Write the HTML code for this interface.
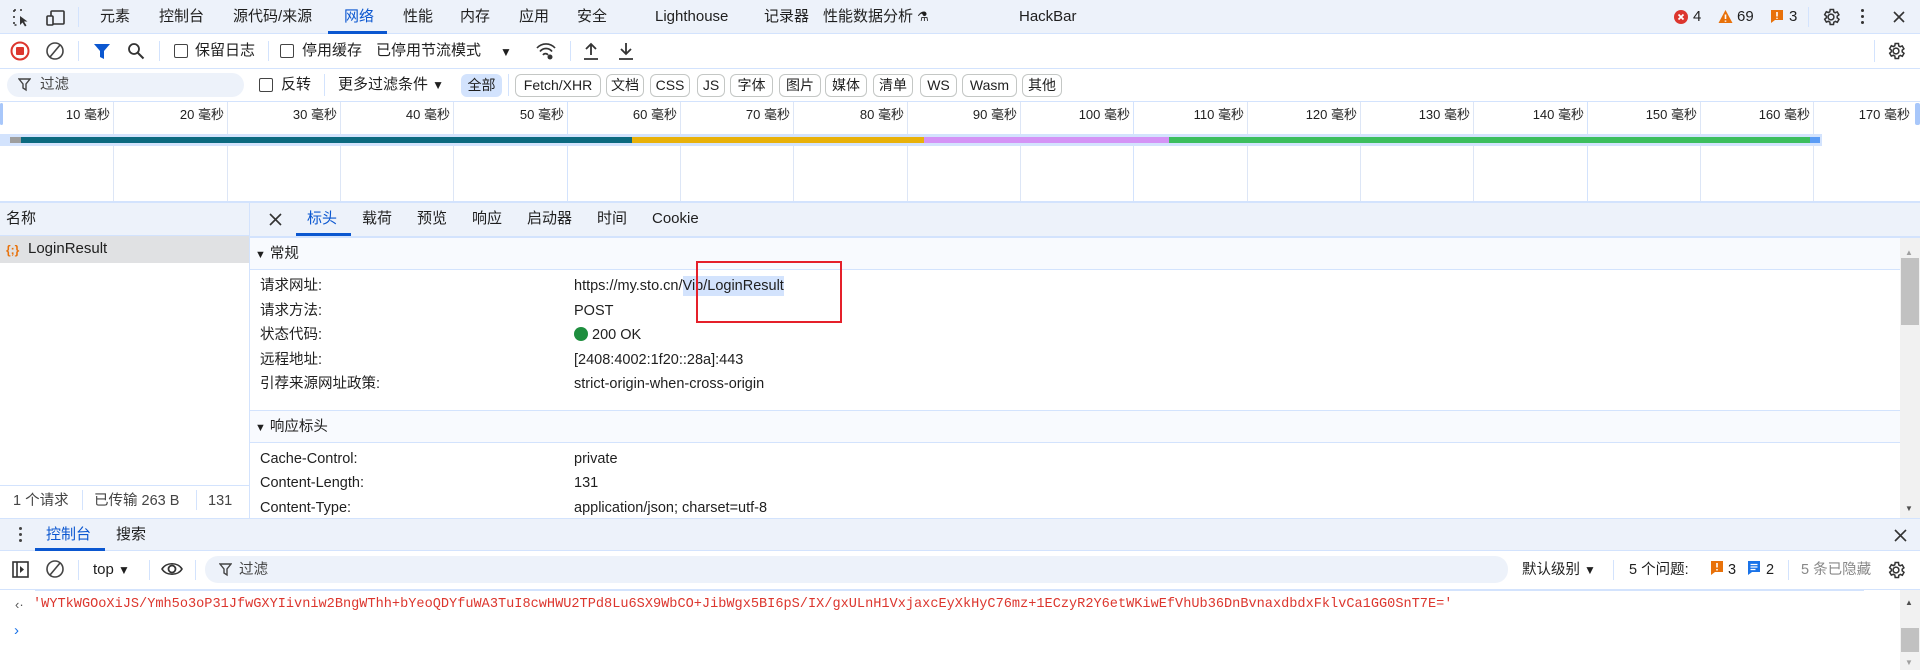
<!DOCTYPE html>
<html><head><meta charset="utf-8"><style>
*{box-sizing:border-box;margin:0;padding:0}
body{width:1920px;height:670px;overflow:hidden;background:#fff;font-family:"Liberation Sans","Noto Sans CJK SC",sans-serif;font-size:15px;line-height:18px;color:#1f1f1f;position:relative}
.a{position:absolute;white-space:nowrap}
.bar{background:#edf2fa}
.hl{height:1px;background:#d3e3fd;position:absolute;left:0;right:0}
.vl{width:1px;background:#d3e3fd;position:absolute}
.tab{position:absolute;top:8px;color:#1f1f1f;white-space:nowrap}
.cb{position:absolute;width:14px;height:14px;border:1.5px solid #444;border-radius:2px;background:#fff}
.fb{position:absolute;top:74px;height:23px;border:1px solid #c4c7c5;border-radius:6px;font-size:14px;line-height:21px;text-align:center;color:#1f1f1f}
.tl{position:absolute;top:107px;font-size:13px;line-height:16px;color:#1f1f1f;text-align:right;width:80px;white-space:nowrap}
.gl{position:absolute;top:102px;height:100px;width:1px;background:#dde6f6}
.lbl{position:absolute;left:260px;font-size:14.5px;white-space:nowrap}
.val{position:absolute;left:574px;font-size:14.5px;white-space:nowrap}
</style></head><body>

<!-- top tab bar -->
<div class="a bar" style="left:0;top:0;width:1920px;height:34px"></div>
<div class="hl" style="top:33px"></div>
<svg class="a" style="left:12px;top:8px" width="20" height="20" viewBox="0 0 20 20"><path d="M2 2h3M8 2h3M2 2v3M2 8v3M2 14v3h3" stroke="#333" stroke-width="1.6" fill="none" stroke-dasharray="2 1.5"/><path d="M8 8l0 9 2.5-2.5 2.5 4 1.5-1-2.5-4 3.5 0z" fill="#333"/></svg>
<svg class="a" style="left:46px;top:8px" width="20" height="20" viewBox="0 0 20 20"><rect x="5" y="3" width="13" height="13" rx="1" stroke="#333" stroke-width="1.6" fill="none"/><rect x="1" y="8" width="6" height="9" rx="1" stroke="#333" stroke-width="1.6" fill="#edf2fa"/></svg>
<div class="vl" style="left:78px;top:7px;height:20px"></div>
<div class="tab" style="left:100px">元素</div>
<div class="tab" style="left:159px">控制台</div>
<div class="tab" style="left:233px">源代码/来源</div>
<div class="tab" style="left:344px;color:#0b57d0">网络</div>
<div class="a" style="left:328px;top:31px;width:59px;height:3px;background:#0b57d0"></div>
<div class="tab" style="left:403px">性能</div>
<div class="tab" style="left:460px">内存</div>
<div class="tab" style="left:519px">应用</div>
<div class="tab" style="left:577px">安全</div>
<div class="tab" style="left:655px">Lighthouse</div>
<div class="tab" style="left:764px">记录器</div>
<div class="tab" style="left:823px">性能数据分析 <span style="font-size:13px">⚗</span></div>
<div class="tab" style="left:1019px">HackBar</div>
<svg class="a" style="left:1674px;top:10px" width="14" height="14"><circle cx="7" cy="7" r="7" fill="#dc362e"/><path d="M4.5 4.5l5 5M9.5 4.5l-5 5" stroke="#fff" stroke-width="1.8"/></svg>
<div class="a" style="left:1693px;top:8px">4</div>
<svg class="a" style="left:1718px;top:9px" width="15" height="15"><path d="M7.5 1L14.5 14H.5z" fill="#e8710a"/><path d="M7.5 5.5v4.5M7.5 11.5v1.2" stroke="#fff" stroke-width="1.6"/></svg>
<div class="a" style="left:1737px;top:8px">69</div>
<svg class="a" style="left:1770px;top:9px" width="14" height="15"><path d="M1 1h12v10H5l-4 3z" fill="#e8710a"/><path d="M7 3v4.5M7 8.7v1.2" stroke="#fff" stroke-width="1.6"/></svg>
<div class="a" style="left:1789px;top:8px">3</div>
<div class="vl" style="left:1808px;top:7px;height:20px"></div>
<svg class="a" style="left:1821px;top:7px" width="20" height="20" viewBox="0 0 24 24"><path d="M12 15.5a3.5 3.5 0 1 0 0-7 3.5 3.5 0 0 0 0 7z M19.4 13a7.5 7.5 0 0 0 0-2l2.1-1.6-2-3.5-2.5 1a7.5 7.5 0 0 0-1.7-1L15 3h-4l-.4 2.7a7.5 7.5 0 0 0-1.7 1l-2.5-1-2 3.5L6.5 11a7.5 7.5 0 0 0 0 2l-2.1 1.6 2 3.5 2.5-1a7.5 7.5 0 0 0 1.7 1L11 21h4l.4-2.7a7.5 7.5 0 0 0 1.7-1l2.5 1 2-3.5z" fill="none" stroke="#333" stroke-width="1.8"/></svg>
<div class="a" style="left:1861px;top:9px;width:3px;line-height:0"><div style="width:3px;height:3px;background:#333;border-radius:2px;margin-bottom:3px"></div><div style="width:3px;height:3px;background:#333;border-radius:2px;margin-bottom:3px"></div><div style="width:3px;height:3px;background:#333;border-radius:2px"></div></div>
<svg class="a" style="left:1893px;top:11px" width="12" height="12"><path d="M1 1l10 10M11 1L1 11" stroke="#333" stroke-width="1.6"/></svg>

<!-- toolbar row -->
<div class="hl" style="top:68px"></div>
<svg class="a" style="left:10px;top:41px" width="20" height="20"><circle cx="10" cy="10" r="8.5" fill="none" stroke="#dc362e" stroke-width="2"/><rect x="6" y="6" width="8" height="8" rx="1" fill="#dc362e"/></svg>
<svg class="a" style="left:45px;top:41px" width="20" height="20"><circle cx="10" cy="10" r="8" fill="none" stroke="#444" stroke-width="1.6"/><path d="M15 4L5 16" stroke="#444" stroke-width="1.6"/></svg>
<div class="vl" style="left:78px;top:41px;height:20px"></div>
<svg class="a" style="left:93px;top:42px" width="18" height="18"><path d="M1 2h16l-6 7v8l-4-2V9z" fill="#0b57d0"/></svg>
<svg class="a" style="left:127px;top:42px" width="18" height="18"><circle cx="7" cy="7" r="5" fill="none" stroke="#333" stroke-width="1.8"/><path d="M11 11l5.5 5.5" stroke="#333" stroke-width="2"/></svg>
<div class="vl" style="left:159px;top:41px;height:20px"></div>
<div class="cb" style="left:174px;top:44px"></div>
<div class="a" style="left:195px;top:42px">保留日志</div>
<div class="vl" style="left:268px;top:41px;height:20px"></div>
<div class="cb" style="left:280px;top:44px"></div>
<div class="a" style="left:302px;top:42px">停用缓存</div>
<div class="a" style="left:376px;top:42px">已停用节流模式</div>
<div class="a" style="left:500px;top:43px;font-size:12px">▼</div>
<svg class="a" style="left:535px;top:41px" width="22" height="20"><path d="M2 7a12 12 0 0 1 18 0M5 10.5a7.5 7.5 0 0 1 12 0M8 14a3 3 0 0 1 5 0" fill="none" stroke="#333" stroke-width="1.7"/><circle cx="15" cy="16" r="2.5" fill="#333"/></svg>
<div class="vl" style="left:570px;top:41px;height:20px"></div>
<svg class="a" style="left:582px;top:41px" width="18" height="20"><path d="M9 14V3M4 8l5-5 5 5M2 18h14" fill="none" stroke="#333" stroke-width="1.8"/></svg>
<svg class="a" style="left:617px;top:41px" width="18" height="20"><path d="M9 2v11M4 8l5 5 5-5M2 18h14" fill="none" stroke="#333" stroke-width="1.8"/></svg>
<div class="vl" style="left:1874px;top:40px;height:22px"></div>
<svg class="a" style="left:1886px;top:41px" width="20" height="20" viewBox="0 0 24 24"><path d="M12 15.5a3.5 3.5 0 1 0 0-7 3.5 3.5 0 0 0 0 7z M19.4 13a7.5 7.5 0 0 0 0-2l2.1-1.6-2-3.5-2.5 1a7.5 7.5 0 0 0-1.7-1L15 3h-4l-.4 2.7a7.5 7.5 0 0 0-1.7 1l-2.5-1-2 3.5L6.5 11a7.5 7.5 0 0 0 0 2l-2.1 1.6 2 3.5 2.5-1a7.5 7.5 0 0 0 1.7 1L11 21h4l.4-2.7a7.5 7.5 0 0 0 1.7-1l2.5 1 2-3.5z" fill="none" stroke="#333" stroke-width="1.8"/></svg>

<!-- filter row -->
<div class="hl" style="top:101px"></div>
<div class="a bar" style="left:7px;top:73px;width:237px;height:24px;border-radius:12px"></div>
<svg class="a" style="left:18px;top:78px" width="13" height="14"><path d="M1 1h11L8 6v6L5 10V6z" fill="none" stroke="#444" stroke-width="1.4"/></svg>
<div class="a" style="left:40px;top:76px;font-size:14.5px;color:#444">过滤</div>
<div class="cb" style="left:259px;top:78px"></div>
<div class="a" style="left:281px;top:76px">反转</div>
<div class="vl" style="left:324px;top:74px;height:22px"></div>
<div class="a" style="left:338px;top:76px">更多过滤条件 <span style="font-size:12px">▼</span></div>
<div class="a" style="left:461px;top:74px;width:41px;height:23px;background:#d3e3fd;border-radius:6px;text-align:center;line-height:23px;font-size:14px">全部</div>
<div class="vl" style="left:508px;top:74px;height:22px"></div>
<div class="fb" style="left:515px;width:86px">Fetch/XHR</div>
<div class="fb" style="left:606px;width:38px">文档</div>
<div class="fb" style="left:650px;width:40px">CSS</div>
<div class="fb" style="left:697px;width:28px">JS</div>
<div class="fb" style="left:730px;width:43px">字体</div>
<div class="fb" style="left:779px;width:42px">图片</div>
<div class="fb" style="left:825px;width:42px">媒体</div>
<div class="fb" style="left:873px;width:40px">清单</div>
<div class="fb" style="left:920px;width:37px">WS</div>
<div class="fb" style="left:962px;width:55px">Wasm</div>
<div class="fb" style="left:1022px;width:40px">其他</div>

<!-- timeline -->
<div class="gl" style="left:113px"></div><div class="gl" style="left:227px"></div><div class="gl" style="left:340px"></div><div class="gl" style="left:453px"></div><div class="gl" style="left:567px;background:#d3e3fd"></div><div class="gl" style="left:680px"></div><div class="gl" style="left:793px"></div><div class="gl" style="left:907px"></div><div class="gl" style="left:1020px"></div><div class="gl" style="left:1133px;background:#d3e3fd"></div><div class="gl" style="left:1247px"></div><div class="gl" style="left:1360px"></div><div class="gl" style="left:1473px"></div><div class="gl" style="left:1587px;background:#d3e3fd"></div><div class="gl" style="left:1700px"></div><div class="gl" style="left:1813px"></div>
<div class="tl" style="left:30px">10 毫秒</div><div class="tl" style="left:144px">20 毫秒</div><div class="tl" style="left:257px">30 毫秒</div><div class="tl" style="left:370px">40 毫秒</div><div class="tl" style="left:484px">50 毫秒</div><div class="tl" style="left:597px">60 毫秒</div><div class="tl" style="left:710px">70 毫秒</div><div class="tl" style="left:824px">80 毫秒</div><div class="tl" style="left:937px">90 毫秒</div><div class="tl" style="left:1050px">100 毫秒</div><div class="tl" style="left:1164px">110 毫秒</div><div class="tl" style="left:1277px">120 毫秒</div><div class="tl" style="left:1390px">130 毫秒</div><div class="tl" style="left:1504px">140 毫秒</div><div class="tl" style="left:1617px">150 毫秒</div><div class="tl" style="left:1730px">160 毫秒</div><div class="tl" style="left:1830px">170 毫秒</div>
<div class="a" style="left:0;top:103px;width:3px;height:22px;background:#a8c7fa;border-radius:2px"></div>
<div class="a" style="left:1915px;top:103px;width:5px;height:22px;background:#a8c7fa;border-radius:2px"></div>
<div class="a" style="left:0;top:134px;width:1822px;height:12px;background:#d3e3fd"></div>
<div class="a" style="left:10px;top:137px;width:11px;height:6px;background:#9e9e9e"></div>
<div class="a" style="left:21px;top:137px;width:611px;height:6px;background:#0b6a80"></div>
<div class="a" style="left:632px;top:137px;width:292px;height:6px;background:#e8b10a"></div>
<div class="a" style="left:924px;top:137px;width:245px;height:6px;background:#d493f5"></div>
<div class="a" style="left:1169px;top:137px;width:641px;height:6px;background:#3cbe5e"></div>
<div class="a" style="left:1810px;top:137px;width:10px;height:6px;background:#5b9cf5"></div>
<div class="hl" style="top:201px;height:2px"></div>

<!-- left panel -->
<div class="vl" style="left:249px;top:202px;height:317px"></div>
<div class="a bar" style="left:0;top:203px;width:249px;height:32px"></div>
<div class="hl" style="top:235px;width:249px"></div>
<div class="a" style="left:6px;top:210px">名称</div>
<div class="a" style="left:0;top:236px;width:249px;height:27px;background:#e0e1e3"></div>
<div class="a" style="left:6px;top:241px;font-size:12px;color:#e8710a;font-weight:bold">{;}</div>
<div class="a" style="left:28px;top:240px">LoginResult</div>
<div class="hl" style="top:485px;width:249px"></div>
<div class="a" style="left:13px;top:492px;font-size:14.5px;color:#444">1 个请求</div>
<div class="vl" style="left:82px;top:490px;height:20px"></div>
<div class="a" style="left:94px;top:492px;font-size:14.5px;color:#444">已传输 263 B</div>
<div class="vl" style="left:196px;top:490px;height:20px"></div>
<div class="a" style="left:208px;top:492px;font-size:14.5px;color:#444">131</div>

<!-- right panel -->
<div class="a bar" style="left:250px;top:203px;width:1670px;height:33px"></div>
<div class="hl" style="top:236px;left:250px;height:2px"></div>
<svg class="a" style="left:269px;top:213px" width="13" height="13"><path d="M1 1l11 11M12 1L1 12" stroke="#333" stroke-width="1.6"/></svg>
<div class="a" style="left:307px;top:210px;color:#0b57d0">标头</div>
<div class="a" style="left:296px;top:233px;width:55px;height:3px;background:#0b57d0"></div>
<div class="a" style="left:362px;top:210px">载荷</div>
<div class="a" style="left:417px;top:210px">预览</div>
<div class="a" style="left:472px;top:210px">响应</div>
<div class="a" style="left:527px;top:210px">启动器</div>
<div class="a" style="left:597px;top:210px">时间</div>
<div class="a" style="left:652px;top:210px">Cookie</div>

<div class="a" style="left:250px;top:238px;width:1650px;height:31px;background:#f8fafe"></div>
<div class="hl" style="top:269px;left:250px;right:20px"></div>
<div class="a" style="left:255px;top:245px;font-size:14.5px"><span style="font-size:11px">▼</span> 常规</div>
<div class="lbl" style="top:277px">请求网址:</div>
<div class="val" style="top:277px">https://my.sto.cn/<span style="background:#d3e3fd;padding:2px 0">Vip/LoginResult</span></div>
<div class="a" style="left:696px;top:261px;width:146px;height:62px;border:2px solid #e5202a"></div>
<div class="lbl" style="top:302px">请求方法:</div><div class="val" style="top:302px">POST</div>
<div class="lbl" style="top:326px">状态代码:</div><div class="val" style="top:326px"><span style="display:inline-block;width:14px;height:14px;border-radius:7px;background:#1e8e3e;vertical-align:-2px"></span> 200 OK</div>
<div class="lbl" style="top:351px">远程地址:</div><div class="val" style="top:351px">[2408:4002:1f20::28a]:443</div>
<div class="lbl" style="top:375px">引荐来源网址政策:</div><div class="val" style="top:375px">strict-origin-when-cross-origin</div>
<div class="hl" style="top:410px;left:250px;right:20px"></div>
<div class="a" style="left:250px;top:411px;width:1650px;height:31px;background:#f8fafe"></div>
<div class="hl" style="top:442px;left:250px;right:20px"></div>
<div class="a" style="left:255px;top:418px;font-size:14.5px"><span style="font-size:11px">▼</span> 响应标头</div>
<div class="lbl" style="top:450px">Cache-Control:</div><div class="val" style="top:450px">private</div>
<div class="lbl" style="top:474px">Content-Length:</div><div class="val" style="top:474px">131</div>
<div class="lbl" style="top:499px">Content-Type:</div><div class="val" style="top:499px">application/json; charset=utf-8</div>
<div class="a" style="left:1900px;top:238px;width:20px;height:281px;background:#f1f1f1"></div>
<div class="a" style="left:1901px;top:258px;width:18px;height:67px;background:#c1c1c1"></div>
<div class="a" style="left:1905px;top:244px;font-size:8px;color:#a0a0a0">▲</div>
<div class="a" style="left:1905px;top:500px;font-size:8px;color:#505050">▼</div>

<!-- drawer -->
<div class="hl" style="top:518px"></div>
<div class="a bar" style="left:0;top:519px;width:1920px;height:32px"></div>
<div class="hl" style="top:550px"></div>
<div class="a" style="left:19px;top:527px;line-height:0"><div style="width:3px;height:3px;background:#444;margin-bottom:3px;border-radius:2px"></div><div style="width:3px;height:3px;background:#444;margin-bottom:3px;border-radius:2px"></div><div style="width:3px;height:3px;background:#444;border-radius:2px"></div></div>
<div class="a" style="left:46px;top:526px;color:#0b57d0">控制台</div>
<div class="a" style="left:35px;top:548px;width:70px;height:3px;background:#0b57d0"></div>
<div class="a" style="left:116px;top:526px">搜索</div>
<svg class="a" style="left:1894px;top:529px" width="13" height="13"><path d="M1 1l11 11M12 1L1 12" stroke="#333" stroke-width="1.6"/></svg>

<svg class="a" style="left:12px;top:561px" width="17" height="17"><rect x="1" y="1" width="15" height="15" fill="none" stroke="#333" stroke-width="1.6"/><path d="M5 1v15" stroke="#333" stroke-width="1.6"/><path d="M8 5l4 3.5-4 3.5z" fill="#333"/></svg>
<svg class="a" style="left:45px;top:559px" width="20" height="20"><circle cx="10" cy="10" r="8" fill="none" stroke="#444" stroke-width="1.6"/><path d="M15 4L5 16" stroke="#444" stroke-width="1.6"/></svg>
<div class="vl" style="left:78px;top:560px;height:20px"></div>
<div class="a" style="left:93px;top:561px">top <span style="font-size:12px">▼</span></div>
<div class="vl" style="left:149px;top:560px;height:20px"></div>
<svg class="a" style="left:161px;top:560px" width="22" height="18"><path d="M1 9C5 2 17 2 21 9 17 16 5 16 1 9z" fill="none" stroke="#333" stroke-width="1.6"/><circle cx="11" cy="9" r="3.5" fill="none" stroke="#333" stroke-width="1.8"/></svg>
<div class="vl" style="left:195px;top:560px;height:20px"></div>
<div class="a bar" style="left:205px;top:556px;width:1303px;height:27px;border-radius:13px"></div>
<svg class="a" style="left:219px;top:563px" width="13" height="14"><path d="M1 1h11L8 6v6L5 10V6z" fill="none" stroke="#444" stroke-width="1.4"/></svg>
<div class="a" style="left:239px;top:561px;font-size:14.5px;color:#444">过滤</div>
<div class="a" style="left:1522px;top:561px;font-size:14.5px">默认级别 <span style="font-size:12px">▼</span></div>
<div class="vl" style="left:1613px;top:560px;height:20px"></div>
<div class="a" style="left:1629px;top:561px;font-size:14.5px">5 个问题:</div>
<svg class="a" style="left:1711px;top:561px" width="12" height="15"><path d="M0 0h12v11H4l-4 3z" fill="#e8710a"/><path d="M6 2v4.5M6 8v1.5" stroke="#fff" stroke-width="1.6"/></svg>
<div class="a" style="left:1728px;top:561px;font-size:14.5px">3</div>
<svg class="a" style="left:1748px;top:561px" width="12" height="15"><path d="M0 0h12v11H4l-4 3z" fill="#1a73e8"/><path d="M2.5 3.5h7M2.5 6h7M2.5 8.5h5" stroke="#fff" stroke-width="1.2"/></svg>
<div class="a" style="left:1766px;top:561px;font-size:14.5px">2</div>
<div class="vl" style="left:1788px;top:560px;height:20px"></div>
<div class="a" style="left:1801px;top:561px;font-size:14.5px;color:#888">5 条已隐藏</div>
<svg class="a" style="left:1886px;top:560px" width="20" height="20" viewBox="0 0 24 24"><path d="M12 15.5a3.5 3.5 0 1 0 0-7 3.5 3.5 0 0 0 0 7z M19.4 13a7.5 7.5 0 0 0 0-2l2.1-1.6-2-3.5-2.5 1a7.5 7.5 0 0 0-1.7-1L15 3h-4l-.4 2.7a7.5 7.5 0 0 0-1.7 1l-2.5-1-2 3.5L6.5 11a7.5 7.5 0 0 0 0 2l-2.1 1.6 2 3.5 2.5-1a7.5 7.5 0 0 0 1.7 1L11 21h4l.4-2.7a7.5 7.5 0 0 0 1.7-1l2.5 1 2-3.5z" fill="none" stroke="#333" stroke-width="1.8"/></svg>
<div class="hl" style="top:589px"></div>
<div class="hl" style="top:590px;left:35px;right:56px"></div>
<div class="a" style="left:15px;top:596px;font-size:13px;color:#555">‹·</div>
<div class="a" style="left:33px;top:596px;font-family:'Liberation Mono',monospace;font-size:13.6px;color:#dc362e">'WYTkWGOoXiJS/Ymh5o3oP31JfwGXYIivniw2BngWThh+bYeoQDYfuWA3TuI8cwHWU2TPd8Lu6SX9WbCO+JibWgx5BI6pS/IX/gxULnH1VxjaxcEyXkHyC76mz+1ECzyR2Y6etWKiwEfVhUb36DnBvnaxdbdxFklvCa1GG0SnT7E='</div>
<div class="a" style="left:14px;top:622px;color:#1a73e8;font-size:15px">›</div>
<div class="a" style="left:1900px;top:590px;width:20px;height:80px;background:#f1f1f1"></div>
<div class="a" style="left:1901px;top:628px;width:18px;height:24px;background:#c1c1c1"></div>
<div class="a" style="left:1905px;top:594px;font-size:8px;color:#505050">▲</div>
<div class="a" style="left:1905px;top:654px;font-size:8px;color:#a0a0a0">▼</div>
</body></html>
